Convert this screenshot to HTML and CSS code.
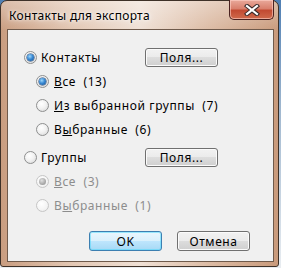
FILE: index.html
```html
<!DOCTYPE html>
<html lang="ru">
<head>
<meta charset="utf-8">
<link rel="stylesheet" href="styles.css">
</head>
<body>
<div class="window">
  <div class="titlebar">
    <span class="title">Контакты для экспорта</span>
    <div class="close">
      <svg width="16" height="12" viewBox="0 0 16 12">
        <path d="M3 2 L13 10 M13 2 L3 10" stroke="#3a2a2a" stroke-width="4.2" stroke-linecap="square" fill="none"/>
        <path d="M3 2 L13 10 M13 2 L3 10" stroke="#ffffff" stroke-width="2.2" stroke-linecap="square" fill="none"/>
      </svg>
    </div>
  </div>
  <div class="client">
    <div class="row main">
      <div class="opt wide"><span class="rb on"></span>Контакты</div>
      <button class="btn">Поля...</button>
    </div>
    <div class="row sub"><span class="rb on"></span><span><u>В</u>се&nbsp; (13)</span></div>
    <div class="row sub"><span class="rb"></span><span><u>И</u>з выбранной группы&nbsp; (7)</span></div>
    <div class="row sub"><span class="rb"></span><span>В<u>ы</u>бранные&nbsp; (6)</span></div>
    <div class="row main group">
      <div class="opt wide"><span class="rb"></span>Группы</div>
      <button class="btn">Поля...</button>
    </div>
    <div class="row sub disabled"><span class="rb on"></span><span><u>В</u>се&nbsp; (3)</span></div>
    <div class="row sub disabled"><span class="rb"></span><span>В<u>ы</u>бранные&nbsp; (1)</span></div>
    <div class="actions">
      <button class="btn default">OK</button>
      <button class="btn">Отмена</button>
    </div>
  </div>
</div>
</body>
</html>
```

FILE: styles.css
```css
html, body {
  margin: 0;
  padding: 0;
}
body {
  width: 281px;
  height: 268px;
  background: linear-gradient(180deg, #4f7fb4 0%, #9fb7cf 40%, #e9edf1 100%);
  font-family: "Noto Sans", "Liberation Sans", sans-serif;
  font-size: 12px;
  letter-spacing: 0.6px;
  color: #000;
  overflow: hidden;
}
.window {
  box-sizing: border-box;
  width: 279px;
  height: 267px;
  border: 1px solid #3e3128;
  border-radius: 7px 7px 3px 3px;
  padding: 0 4px 4px 6px;
  display: flex;
  flex-direction: column;
  background:
    linear-gradient(180deg, rgba(255,255,255,0.35) 0px, rgba(255,255,255,0) 30px),
    linear-gradient(90deg, #c99d80 0%, #e2c6b2 25%, #efe0d5 50%, #dcbba4 75%, #c99a7b 100%);
}
.titlebar {
  height: 28px;
  display: flex;
  justify-content: space-between;
  align-items: flex-start;
}
.title {
  padding-left: 2px;
  margin-top: 7px;
  line-height: 16px;
  letter-spacing: 0.3px;
  text-shadow: 0 0 6px rgba(255,255,255,0.9), 0 0 3px rgba(255,255,255,0.9);
}
.close {
  box-sizing: border-box;
  width: 45px;
  height: 20px;
  margin-top: -1px;
  border: 1px solid #4a2220;
  border-top: none;
  border-radius: 0 0 5px 5px;
  background: linear-gradient(180deg, #e9a99b 0%, #d9806d 45%, #c24a32 55%, #cf6a4c 100%);
  box-shadow: inset 0 0 0 1px rgba(255,210,200,0.6);
  display: flex;
  align-items: center;
  justify-content: center;
}
.client {
  flex: 1;
  border: 1px solid #6f5a4b;
  background: #f0f0f0;
  padding: 15px 0 0 16px;
  display: flex;
  flex-direction: column;
}
.row {
  height: 24px;
  display: flex;
  align-items: center;
  white-space: nowrap;
}
.row.sub {
  padding-left: 12px;
}
.row.group {
  margin-top: 4px;
}
.opt {
  display: flex;
  align-items: center;
}
.opt.wide {
  width: 121px;
}
.rb {
  box-sizing: border-box;
  width: 13px;
  height: 13px;
  border-radius: 50%;
  border: 1px solid #8e8f8f;
  background: radial-gradient(circle at 40% 35%, #ffffff 0%, #f2f2f2 45%, #d4d4d4 100%);
  margin-right: 4px;
  flex: none;
  display: flex;
  align-items: center;
  justify-content: center;
}
.sub .rb {
  margin-right: 5px;
}
.rb.on::after {
  content: "";
  width: 7px;
  height: 7px;
  border-radius: 50%;
  background: radial-gradient(circle at 40% 35%, #9fd8fb 0%, #3a8ad4 45%, #114a8c 100%);
  box-shadow: 0 0 0 0.5px #1d3f6a;
}
.disabled {
  color: #8d8d8d;
}
.disabled .rb {
  border-color: #c6c6c6;
  background: radial-gradient(circle at 40% 35%, #ffffff 0%, #f4f4f4 60%, #e6e6e6 100%);
}
.disabled .rb.on::after {
  background: radial-gradient(circle at 40% 35%, #e0e0e0 0%, #a9a9a9 60%, #8a8a8a 100%);
  box-shadow: none;
}
u {
  text-underline-offset: 1px;
}
.btn {
  box-sizing: border-box;
  width: 73px;
  height: 19px;
  padding: 0;
  border: 1px solid #707070;
  border-radius: 3px;
  background: linear-gradient(180deg, #f2f2f2 0%, #ebebeb 49%, #dddddd 50%, #cfcfcf 100%);
  box-shadow: inset 0 0 0 1px #fbfbfb;
  font-family: inherit;
  font-size: 12px;
  letter-spacing: 0.6px;
  color: #000;
  line-height: 15px;
}
.actions {
  margin-top: 14px;
  padding-left: 65px;
  display: flex;
  gap: 15px;
}
.actions .btn {
  height: 20px;
}
.btn.default {
  border-color: #3c7fb1;
  background: linear-gradient(180deg, #eaf6fd 0%, #d9f0fc 49%, #bee6fd 50%, #a7d9f5 100%);
  box-shadow: inset 0 0 0 1px #48d8fb80;
}
```
